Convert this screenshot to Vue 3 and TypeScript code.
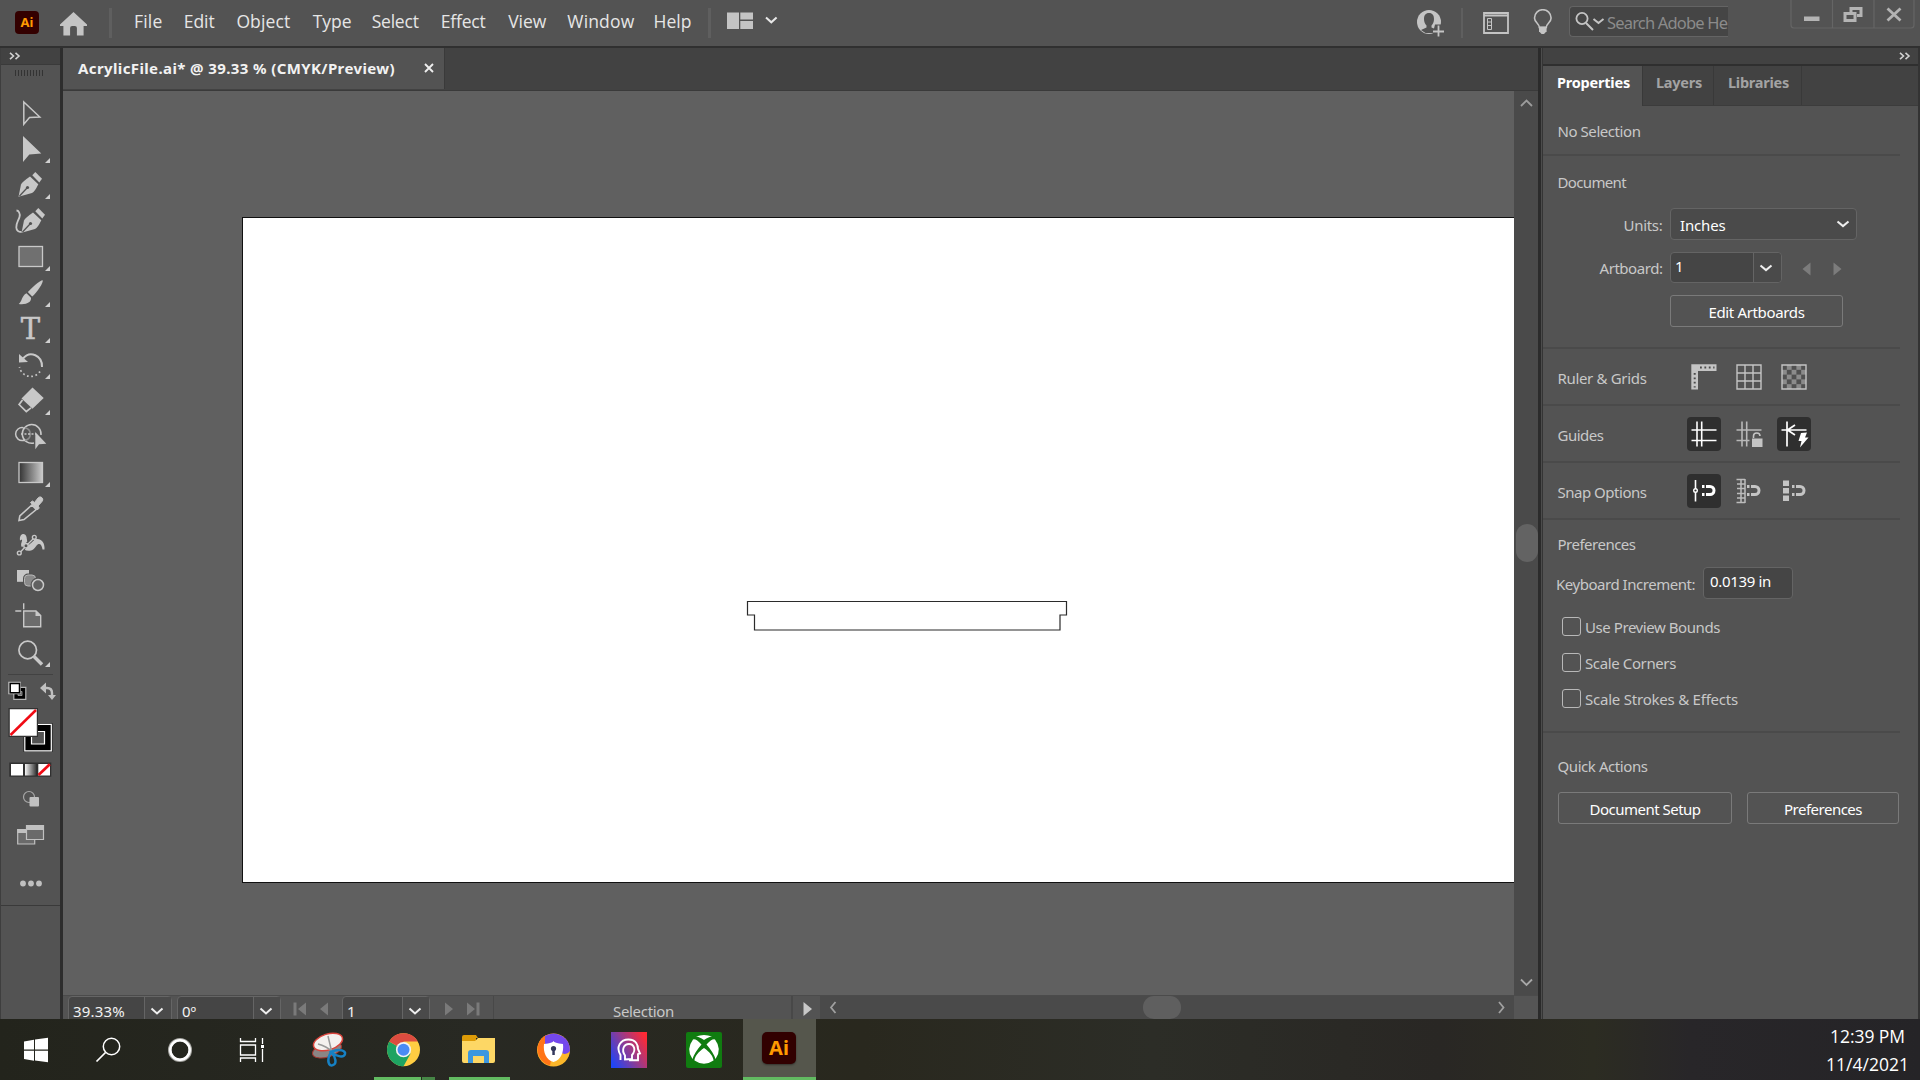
<script setup lang="ts">
import type { Directive } from 'vue'

// Tracks a label so that its advance width equals the given pixel width.
const vFit: Directive<HTMLElement, number> = {
  mounted(el, { value }) {
    const chars = (el.textContent ?? '').trim().length
    el.style.letterSpacing = '0px'
    const natural = el.getBoundingClientRect().width
    el.style.letterSpacing = `${(value - natural) / chars}px`
  },
}

interface MenuItem { label: string; text: number; slot: number }
const menus: MenuItem[] = [
  { label: 'File', text: 28.5, slot: 49.7 },
  { label: 'Edit', text: 31, slot: 52.7 },
  { label: 'Object', text: 54, slot: 76.3 },
  { label: 'Type', text: 39, slot: 59 },
  { label: 'Select', text: 47, slot: 69 },
  { label: 'Effect', text: 45, slot: 67.5 },
  { label: 'View', text: 38, slot: 59.2 },
  { label: 'Window', text: 67, slot: 86.2 },
  { label: 'Help', text: 38, slot: 54 },
]

const tools = [
  { id: 'selection', more: false }, { id: 'direct', more: true }, { id: 'pen', more: true },
  { id: 'curvature', more: false }, { id: 'rect', more: true }, { id: 'brush', more: true },
  { id: 'type', more: true }, { id: 'rotate', more: true }, { id: 'eraser', more: true },
  { id: 'builder', more: false }, { id: 'gradient', more: true }, { id: 'dropper', more: false },
  { id: 'puppet', more: false }, { id: 'blend', more: false }, { id: 'artboard', more: false },
  { id: 'zoom', more: true },
]

const checks = [
  { label: 'Use Preview Bounds', width: 135 },
  { label: 'Scale Corners', width: 91 },
  { label: 'Scale Strokes & Effects', width: 153 },
]
</script>

<template>
  <div class="screen">
    <header class="menubar">
      <div class="ai-small"><span>Ai</span></div>
      <svg class="home" width="27" height="24" viewBox="0 0 27 24"><path d="M13.5 0 27 12.6V14h-3.4v9.6h-6.7V16a2 2 0 0 0-2-2h-2.8a2 2 0 0 0-2 2v7.6H3.4V14H0v-1.4Z" fill="#c4c4c4" /></svg>
      <i class="vline first" />
      <nav class="menus">
        <div v-for="m in menus" :key="m.label" class="menu" :style="{ width: m.slot + 'px' }"><span v-fit="m.text">{{ m.label }}</span></div>
      </nav>
      <i class="vline" />
      <svg class="arrange" width="54" height="20" viewBox="0 0 54 20"><path d="M1 1.5h12v16.500H1zM14.300 1.500H27v7H14.300zM14.300 10H27v8H14.300z" fill="#c4c4c4" /><path d="m40 6.500 5.300 4.800 5.300-4.800" fill="none" stroke="#e8e8e8" stroke-width="2" /></svg>
      <div class="grow" />
      <svg class="user" width="30" height="30" viewBox="0 0 30 30">
        <circle cx="13" cy="14" r="12" fill="#c4c4c4" />
        <path d="M13 5c3.500 0 5 2.500 5 6 0 2.800-1 5-2.500 6.500v2l6 2.500-5 3H9.500L5 22l5.500-2.500v-2C9 16 8 13.800 8 11c0-3.500 1.500-6 5-6Z" fill="#535353" />
        <path d="M19 16.500h10v12H16z" fill="#535353" /><path d="M22.500 17.500v11M17 23.500h11" stroke="#c4c4c4" stroke-width="1.800" />
      </svg>
      <i class="vline user-line" />
      <svg class="workspace" width="26" height="22" viewBox="0 0 26 22"><path d="M1 1h24v20H1z" fill="none" stroke="#c4c4c4" stroke-width="1.800" /><path d="M1 3.500h24" stroke="#c4c4c4" stroke-width="2" /><path d="M4.500 6.500h4v11h-4zM4.500 10h4M4.500 13.500h4" fill="none" stroke="#c4c4c4" /></svg>
      <svg class="bulb" width="20" height="26" viewBox="0 0 20 26"><path d="M6.300 18.500C6.300 14.500 1.500 13.500 1.500 9a8.300 8.300 0 0 1 16.600 0c0 4.500-4.800 5.500-4.800 9.500Z" fill="none" stroke="#c4c4c4" stroke-width="1.600" /><path d="M6 17.500h7.600v4.800L11 25H8.600L6 22.300z" fill="#c4c4c4" /></svg>
      <div class="search">
        <svg width="34" height="24" viewBox="0 0 34 24"><circle cx="9" cy="8.500" r="5.600" fill="none" stroke="#c4c4c4" stroke-width="1.800" /><path d="m13 13 7 7M20.500 9l5 4 5-4" fill="none" stroke="#c4c4c4" stroke-width="2" /></svg>
        <span v-fit="133">Search Adobe Help</span>
      </div>
      <svg class="winbtns" width="126" height="30" viewBox="0 0 126 30">
        <path d="M1 0v25q0 3 3 3h117q3 0 3-3V0M42.500 0v28M84 0v28" fill="none" stroke="#656565" stroke-width="1.200" />
        <path d="M14 16.500h15.500v4.500H14z" fill="#b4b4b4" />
        <path d="M61 12V8.500h10v7h-4M55 13.500h10v7H55z" fill="none" stroke="#b4b4b4" stroke-width="3" />
        <path d="m97.500 8.500 13 12m0-12-13 12" stroke="#b4b4b4" stroke-width="2.800" />
      </svg>
    </header>

    <main class="body">
      <aside class="toolbar">
        <div class="dock-head"><svg width="12" height="8" viewBox="0 0 12 8"><path d="m1 .8 3.500 3.200L1 7.200M6.500.8 10 4 6.500 7.200" fill="none" stroke="#d2d2d2" stroke-width="1.600" /></svg></div>
        <div class="grip"><i /></div>
        <svg v-for="t in tools" :key="t.id" class="tool" width="60" height="36" viewBox="0 0 60 36">
          <path v-if="t.more" d="M50 27v5h-5z" fill="#d0d0d0" />
          <path v-if="t.id === 'selection'" d="M23.800 7v22.300l5.700-6.700 10.300-.6Z" fill="none" stroke="#c8c8c8" stroke-width="1.500" />
          <path v-else-if="t.id === 'direct'" d="M23 5v26l6.300-7.500 12-1Z" fill="#c8c8c8" />
          <g v-else-if="t.id === 'pen' || t.id === 'curvature'">
            <g :transform="t.id === 'curvature' ? 'translate(3 0)' : ''">
              <path d="M18.500 29.800 21 17.500q1-2.500 9-8l8.300 7.800q-3.500 7.500-6.300 8.800Z" fill="#c8c8c8" /><path d="m32.300 8.300 3-3.200L42 11.800l-2.700 3.700Z" fill="#c8c8c8" />
              <path d="m19.500 29 7.500-8" stroke="#535353" stroke-width="1.200" /><circle cx="27.500" cy="20.500" r="1.600" fill="#535353" />
            </g>
            <path v-if="t.id === 'curvature'" d="M16.500 7.500c2 0 4 3 3 6.500-1.200 4-3.500 6-3.200 10.500.2 3 2.200 4.500 5.200 4.500" fill="none" stroke="#c8c8c8" stroke-width="1.800" />
          </g>
          <rect v-else-if="t.id === 'rect'" x="19" y="7.500" width="23.500" height="20" fill="#707070" stroke="#c8c8c8" stroke-width="1.300" />
          <g v-else-if="t.id === 'brush'" fill="#c8c8c8"><path d="M42.700 5.200c1 2-5.500 12-10.500 16.300l-4.400-4.400C31.500 12.500 41 4.700 42.700 5.200Z" /><path d="M26.500 18.300 31 22.800c.6 4.200-4 7.200-12.300 6.200 3.300-1.800 2.800-8.300 7.800-10.700Z" /></g>
          <text v-else-if="t.id === 'type'" x="30.500" y="28.300" text-anchor="middle" font-family="DejaVu Serif" font-size="29" fill="#c8c8c8" stroke="#c8c8c8" stroke-width=".5">T</text>
          <g v-else-if="t.id === 'rotate'" fill="none" stroke="#c8c8c8"><path d="M23 11.500C30 3 42.500 8.500 42 20" stroke-width="2" /><path d="M40 24.500A11.300 11.300 0 0 1 19.500 20" stroke-width="1.700" stroke-dasharray="1.700 2.600" /><path d="M19 7V15.500l9-.5Z" fill="#c8c8c8" stroke="none" /></g>
          <g v-else-if="t.id === 'eraser'"><path d="M32.500 4.500 43.700 15 32.500 25.800 21.500 15.500Z" fill="#c8c8c8" /><path d="m22.500 17-3.400 4.500 7.200 7 4.700-3.700" fill="none" stroke="#c8c8c8" stroke-width="1.700" /></g>
          <g v-else-if="t.id === 'builder'" fill="none" stroke="#c8c8c8" stroke-width="1.500"><path d="M34 24a9.400 9.400 0 1 1 7-8M23.500 8.700a6.500 6.500 0 1 0 0 12.700l3-.5" /><path d="M25 9c7 1 7 11 0 12.300" stroke="#8c8c8c" /><path d="M21 15h15" stroke-dasharray="2 1.500" /><path d="M35.300 13v17.300l3.700-5 7.300-.6Z" fill="#c8c8c8" stroke="none" /></g>
          <g v-else-if="t.id === 'gradient'"><defs><linearGradient id="tool-grad"><stop stop-color="#333" /><stop offset="1" stop-color="#cacaca" /></linearGradient></defs><rect x="19" y="7.500" width="23.500" height="20" fill="url(#tool-grad)" stroke="#c8c8c8" stroke-width="1.300" /></g>
          <g v-else-if="t.id === 'dropper'"><path d="m31.800 14 4.500 4.500L24 28.500l-5 1 .8-4.500Z" fill="none" stroke="#c8c8c8" stroke-width="1.600" /><path d="m30.500 11.500 2-1.500 2 1.500 3.500-4.500c2.500-3 6.500.8 4 3.500L38 15l1.300 2-2 2Z" fill="#c8c8c8" stroke="#c8c8c8" stroke-linejoin="round" /></g>
          <g v-else-if="t.id === 'puppet'"><path d="M20 13.500c-1-7.500 5.500-8 6.500-3.500.5 3 .5 5 2.500 7 3-1 4-4.300 7-5 6-1 9 4.500 8.500 10.500h-2c-.5-4-2-6-4-5.500-2.500 1-3.500 5.500-7.500 6.500-4.500 1.200-8-1-9.500-4-1.200-2.500 1-5.500.5-7Z" fill="#c8c8c8" /><path d="m19.500 26.300 6.500-8 8.300-8" stroke="#535353" stroke-width="3.500" /><path d="m20.500 25 5-5.500 8-8" stroke="#c8c8c8" stroke-width="1.300" /><g fill="#535353" stroke="#c8c8c8" stroke-width="1.400"><circle cx="19.300" cy="26" r="1.900" /><circle cx="26" cy="18.700" r="2.200" /><circle cx="34.300" cy="10.300" r="1.900" /></g></g>
          <g v-else-if="t.id === 'blend'"><path d="M17 7h12v11.800H17z" fill="#c8c8c8" /><rect x="24.500" y="12" width="11" height="11" rx="3.500" fill="#8a8a8a" stroke="#535353" stroke-width="3" /><rect x="24.500" y="12" width="11" height="11" rx="3.500" fill="#8a8a8a" stroke="#b8b8b8" /><circle cx="38" cy="22" r="5.500" fill="#606060" stroke="#535353" stroke-width="4" /><circle cx="38" cy="22" r="5.500" fill="#606060" stroke="#c8c8c8" stroke-width="1.500" /></g>
          <g v-else-if="t.id === 'artboard'"><path d="M23.700 12H36l4.700 4.500v11.200h-17z" fill="#6c6c6c" stroke="#c8c8c8" stroke-width="1.400" /><path d="M35.500 11.500v5.500H41Z" fill="#c8c8c8" /><path d="M23.700 4.300v6M15.300 12h6" stroke="#c8c8c8" stroke-width="1.400" /></g>
          <g v-else fill="none" stroke="#c8c8c8"><circle cx="27.700" cy="15" r="8.800" stroke-width="1.700" /><path d="m34 21.500 8 8" stroke-width="3.400" /></g>
        </svg>
        <svg class="swatches" width="60" height="231" viewBox="0 674 60 231">
          <defs><linearGradient id="sw-grad"><stop stop-color="#f4f4f4" /><stop offset="1" stop-color="#3c3c3c" /></linearGradient></defs>
          <path d="M8 674.500h45" stroke="#424242" />
          <path d="M13.800 687.300h12v12h-12z" fill="#000" stroke="#b5b5b5" stroke-width="1.200" /><path d="M18 691.500h4v4h-4z" fill="#535353" stroke="#aaa" stroke-width=".8" />
          <path d="M9.300 682.700h10.500v10.500H9.300z" fill="#fff" stroke="#c4c4c4" stroke-width="2" /><path d="M10.200 683.500h9.300v9.300h-9.300z" fill="#fff" stroke="#000" stroke-width="1.500" />
          <path d="M44 688h3q5 0 5 5v4" fill="none" stroke="#c0c0c0" stroke-width="2.400" /><path d="M40 688l6-5.500v11ZM48 695h8l-4 5Z" fill="#c0c0c0" />
          <path d="M23.500 723h29v29h-29z" fill="#1c1c1c" /><path d="M24.800 724.300h26.500v26.500H24.800z" fill="#000" stroke="#fff" stroke-width="1.200" /><path d="M31.500 731.500h13v12.500h-13z" fill="#535353" stroke="#fff" stroke-width="1.200" />
          <path d="M8.500 708h29.500V737H8.500z" fill="#333" /><path d="M9.800 709.300h27v26.500h-27z" fill="#fff" /><path d="m10.500 735 25.500-25" stroke="#f00a14" stroke-width="2.500" />
          <path d="M9.300 762.500h42v14.300h-42z" fill="#303030" /><path d="M11 764h12v11.500H11z" fill="#fff" /><path d="M25 764h11v11.500H25z" fill="url(#sw-grad)" /><path d="M38.300 764H50v11.500H38.300z" fill="#fff" /><path d="m38.500 775 11.300-10.700" stroke="#f00a14" stroke-width="2.700" />
          <circle cx="29" cy="797" r="5.500" fill="none" stroke="#a8a8a8" stroke-width="1.200" /><rect x="29.500" y="797" width="9.500" height="9.500" rx="1" fill="#c0c0c0" />
          <path d="M17.700 829.500h17v14.500h-17z" fill="#6a6a6a" stroke="#c0c0c0" stroke-width="1.200" /><path d="M17.300 829h17.500v4H17.300z" fill="#c0c0c0" />
          <path d="M26.500 825.500h17v14h-17z" fill="#6a6a6a" stroke="#c0c0c0" stroke-width="1.200" /><path d="M26 825h18v5H26z" fill="#c0c0c0" />
          <g fill="#c0c0c0"><circle cx="23" cy="883.500" r="2.900" /><circle cx="31" cy="883.500" r="2.900" /><circle cx="39" cy="883.500" r="2.900" /></g>
        </svg>
      </aside>

      <section class="document">
        <div class="tabs"><div class="doc-tab"><span v-fit="317">AcrylicFile.ai* @ 39.33 % (CMYK/Preview)</span><svg width="10" height="10" viewBox="0 0 10 10"><path d="m1 1 8 8m0-8L1 9" stroke="#eee" stroke-width="1.900" /></svg></div></div>
        <div class="stage">
          <svg class="canvas" width="1451" height="904" viewBox="63 91 1451 904">
            <rect x="242.500" y="217.500" width="1280" height="665" fill="#fff" stroke="#111" stroke-width="1" />
            <path d="M747.500 601.500h319v13.500h-6.500v15H754.500V615h-7z" fill="none" stroke="#2b2b2b" stroke-width="1.200" />
          </svg>
          <div class="vscroll">
            <svg width="24" height="24" viewBox="0 0 24 24"><path d="m7 15 5.500-5.500L18 15" fill="none" stroke="#9c9c9c" stroke-width="1.800" /></svg>
            <i />
            <svg width="24" height="24" viewBox="0 0 24 24"><path d="m7 8.500 5.500 5.500L18 8.500" fill="none" stroke="#a8a8a8" stroke-width="1.800" /></svg>
          </div>
        </div>
        <div class="status">
          <div class="field zoomfield"><span v-fit="56">39.33%</span><b><svg width="14" height="8" viewBox="0 0 14 8"><path d="m1.500 1.500 5.500 5 5.500-5" /></svg></b></div>
          <div class="field rotfield"><span v-fit="18">0º</span><b><svg width="14" height="8" viewBox="0 0 14 8"><path d="m1.500 1.500 5.500 5 5.500-5" /></svg></b></div>
          <svg class="nav" width="61" height="24" viewBox="282 995 61 24"><path d="M294.500 1002.500h3v13h-3zM307 1002.500v13l-8-6.500zM329 1002.500v13l-8-6.500z" fill="#7a7a7a" /></svg>
          <div class="field pagefield"><span>1</span><b><svg width="14" height="8" viewBox="0 0 14 8"><path d="m1.500 1.500 5.500 5 5.500-5" /></svg></b></div>
          <svg class="nav" width="63" height="24" viewBox="431 995 63 24"><path d="M446 1002.500v13l8-6.500zM468 1002.500v13l8-6.500zM477.500 1002.500h3v13h-3z" fill="#7a7a7a" /></svg>
          <div class="mode"><span v-fit="61">Selection</span></div>
          <svg class="nav play" width="27" height="24" viewBox="0 0 27 24"><path d="M10.500 7v14l8.500-7z" fill="#c8c8c8" /></svg>
          <div class="hscroll">
            <svg width="24" height="24" viewBox="0 0 24 24"><path d="m15.500 7-4.500 5.500 4.500 5.500" fill="none" stroke="#a0a0a0" stroke-width="1.800" /></svg>
            <i />
            <svg width="24" height="24" viewBox="0 0 24 24"><path d="m9 7 4.500 5.500L9 18" fill="none" stroke="#a0a0a0" stroke-width="1.800" /></svg>
          </div>
          <div class="corner" />
        </div>
      </section>

      <aside class="panel">
        <div class="panel-head"><svg width="12" height="8" viewBox="0 0 12 8"><path d="m1 .8 3.500 3.200L1 7.200M6.500.8 10 4 6.500 7.200" fill="none" stroke="#d2d2d2" stroke-width="1.600" /></svg></div>
        <div class="panel-tabs">
          <div class="ptab active"><span v-fit="73">Properties</span></div>
          <div class="ptab t2"><span v-fit="46">Layers</span></div>
          <div class="ptab t3"><span v-fit="61">Libraries</span></div>
        </div>
        <div class="panel-body">
          <div class="sec nosel"><span v-fit="83">No Selection</span></div>
          <div class="sec doc">
            <div class="heading"><span v-fit="68.500">Document</span></div>
            <div class="line"><label><span v-fit="39">Units:</span></label><div class="box select"><span v-fit="45.500">Inches</span><svg width="14" height="8" viewBox="0 0 14 8"><path d="m1.500 1.500 5.500 4.600 5.500-4.600" /></svg></div></div>
            <div class="line art"><label><span v-fit="63">Artboard:</span></label><div class="box combo"><span>1</span><b><svg width="14" height="8" viewBox="0 0 14 8"><path d="m1.500 1.500 5.500 4.600 5.500-4.600" /></svg></b></div><svg class="steps" width="40" height="14" viewBox="0 0 40 14"><path d="M8.500.5v13L.5 7zM31.500.5v13l8-6.500z" fill="#7c7c7c" /></svg></div>
            <div class="btn edit"><span v-fit="96">Edit Artboards</span></div>
          </div>
          <div class="sec opt">
            <div class="optlabel"><span v-fit="89">Ruler &amp; Grids</span></div>
            <svg class="ico" width="34" height="34" viewBox="0 0 34 34"><path d="M4.300 4.300h25.200v6.700H11v18.500H4.300z" fill="#c4c4c4" /><path d="M13 7.500h14.500" stroke="#4b4b4b" stroke-width="2" stroke-dasharray="1.800 2.600" /><path d="M7.700 13v14.500" stroke="#4b4b4b" stroke-width="2" stroke-dasharray="1.800 2.600" /></svg>
            <svg class="ico" width="34" height="34" viewBox="0 0 34 34"><path d="M5 5h24v24H5zM13 5v24M21 5v24M5 13h24M5 21h24" fill="none" stroke="#c4c4c4" stroke-width="1.400" /></svg>
            <svg class="ico" width="34" height="34" viewBox="0 0 34 34"><defs><pattern id="chk" x="5" y="5" width="9.600" height="9.600" patternUnits="userSpaceOnUse"><path d="M0 0h9.600v9.600H0z" fill="#505050" /><path d="M0 4.800h4.800v4.800H0zM4.800 0h4.800v4.800H4.800z" fill="#8b8b8b" /></pattern></defs><path d="M5 5h24v24H5z" fill="url(#chk)" stroke="#c4c4c4" stroke-width="1.400" /></svg>
          </div>
          <div class="sec opt">
            <div class="optlabel"><span v-fit="46">Guides</span></div>
            <svg class="ico on" width="34" height="34" viewBox="0 0 34 34"><path d="M10 4.500v25M14.700 4.500v25M4.500 13h25M4.500 23.500h25" stroke="#fff" stroke-width="1.600" /></svg>
            <svg class="ico" width="34" height="34" viewBox="0 0 34 34"><path d="M10 4.500v25M14.700 4.500v25M4.500 13h25M4.500 23.500h13" stroke="#b8b8b8" stroke-width="1.600" /><path d="M20 21.500h10.500V30H20z" fill="#c4c4c4" /><path d="M21.500 21v-2c0-4 6.500-4 6.500 0" fill="none" stroke="#c4c4c4" stroke-width="1.600" /></svg>
            <svg class="ico on" width="34" height="34" viewBox="0 0 34 34"><path d="M10 4.500v25M4.500 13h25M18 8l-7.500 5L18 18" fill="none" stroke="#fff" stroke-width="1.700" /><path d="m24 16 6-.5-2 5h3.500L23 30.500l1.500-6.500h-3Z" fill="#fff" /></svg>
          </div>
          <div class="sec opt">
            <div class="optlabel"><span v-fit="89">Snap Options</span></div>
            <svg class="ico on" width="34" height="34" viewBox="0 0 34 34"><path d="M8.500 6v21.500" stroke="#fff" stroke-width="1.600" /><circle cx="8.500" cy="16.500" r="1.800" fill="#2f2f2f" stroke="#fff" stroke-width="1.400" /><path d="M19 12.500h4a4 4 0 0 1 0 8h-4" fill="none" stroke="#fff" stroke-width="3" /><path d="M15 11h2.500v3H15zM15 19h2.500v3H15z" fill="#fff" /></svg>
            <svg class="ico" width="34" height="34" viewBox="0 0 34 34"><path d="M13 5v24M4.500 5.500H13M4.500 28.500H13M9 5v24M5 10h8M5 14.500h8M5 19.500h8M5 24h8" stroke="#bcbcbc" stroke-width="1.500" fill="none" /><path d="M19 12.500h4a4 4 0 0 1 0 8h-4" fill="none" stroke="#c4c4c4" stroke-width="3" /><path d="M15 11h2.500v3H15zM15 19h2.500v3H15z" fill="#c4c4c4" /></svg>
            <svg class="ico" width="34" height="34" viewBox="0 0 34 34"><path d="M6 6.500h6v5.500H6zM6 14h6v5.500H6zM6 21.500h6V27H6z" fill="#c4c4c4" /><path d="M19 12.500h4a4 4 0 0 1 0 8h-4" fill="none" stroke="#c4c4c4" stroke-width="3" /><path d="M15 11h2.500v3H15zM15 19h2.500v3H15z" fill="#c4c4c4" /></svg>
          </div>
          <div class="sec prefs">
            <div class="heading"><span v-fit="78">Preferences</span></div>
            <div class="key"><span v-fit="139">Keyboard Increment:</span><div class="box inc"><span v-fit="61">0.0139 in</span></div></div>
            <div v-for="c in checks" :key="c.label" class="check"><i /><span v-fit="c.width">{{ c.label }}</span></div>
          </div>
          <div class="quick">
            <div class="heading"><span v-fit="90">Quick Actions</span></div>
            <div class="btns"><div class="btn b1"><span v-fit="111">Document Setup</span></div><div class="btn b2"><span v-fit="78">Preferences</span></div></div>
          </div>
        </div>
      </aside>
    </main>

    <footer class="taskbar">
      <svg class="tb" width="72" height="61" viewBox="0 1019 72 61"><path d="m24 1041.500 10-1.800v9.800H24zM35 1039.500l13-1.700v11.700H35zM24 1050.700h10v10L24 1059zM35 1050.700h13v11.500l-13-1.700z" fill="#fff" /></svg>
      <svg class="tb" width="72" height="61" viewBox="72 1019 72 61"><circle cx="111.500" cy="1046.500" r="8.200" fill="none" stroke="#fff" stroke-width="1.500" /><path d="m105.500 1052.500-9 9" stroke="#fff" stroke-width="1.700" /></svg>
      <svg class="tb" width="72" height="61" viewBox="144 1019 72 61"><circle cx="180" cy="1050" r="10.300" fill="none" stroke="#a5a5a1" stroke-width="3.500" /><circle cx="180" cy="1050" r="9.700" fill="none" stroke="#fff" stroke-width="2.500" /></svg>
      <svg class="tb" width="76" height="61" viewBox="216 1019 76 61"><path d="M240.500 1038v3.500h15V1038M240.500 1062v-4h15v4M240.500 1045h15v10h-15zM262.500 1038v6M262.500 1049v13" fill="none" stroke="#fff" stroke-width="1.300" /><path d="M261 1045h3v3h-3z" fill="#fff" /></svg>
      <svg class="tb" width="76" height="61" viewBox="292 1019 76 61">
        <ellipse cx="327" cy="1050" rx="15" ry="7" fill="#8b8585" stroke="#a63630" transform="rotate(-17 327 1050)" /><ellipse cx="328" cy="1042" rx="15" ry="8" fill="#f4f1ef" stroke="#d9443c" stroke-width="1.500" transform="rotate(-17 328 1042)" />
        <path d="M318 1044q8 2 15 8M328 1036l4 17" stroke="#999" stroke-width="1.500" fill="none" /><path d="M331 1052c9-4 15-1 14 2-1 4-8 3-14-2Zm0 0c-5 9-2 15 2 13 4-1 3-8-2-13Z" fill="none" stroke="#1681c4" stroke-width="2.500" />
      </svg>
      <svg class="tb" width="73" height="61" viewBox="368 1019 73 61">
        <circle cx="403.500" cy="1049.700" r="16.500" fill="#ffcd42" /><path d="M389.200 1041.500a16.500 16.500 0 0 0 14.300 24.700l7-12.500-7-4Z" fill="#1ea362" /><path d="M389.200 1041.500a16.500 16.500 0 0 1 28.600 0h-14.300v8Z" fill="#dc4c40" />
        <circle cx="403.500" cy="1049.700" r="7.600" fill="#f3f3f3" /><circle cx="403.500" cy="1049.700" r="6" fill="#4a8bf4" /><path d="M374 1077h47v3h-47z" fill="#62bb61" /><path d="M422 1077h13v3h-13z" fill="#468646" />
      </svg>
      <svg class="tb" width="75" height="61" viewBox="441 1019 75 61">
        <path d="M462 1037q0-2 2-2h12l2 3h-2v5h-14z" fill="#dd9b07" /><path d="M478 1038h17v23q0 2-2 2h-29q-2 0-2-2v-20h13Z" fill="#fdd765" /><path d="M468 1063v-10q0-3 3-3h15q3 0 3 3v10h-5v-7h-11v7z" fill="#3c97df" /><path d="M449 1077h61v3h-61z" fill="#62bb61" />
      </svg>
      <svg class="tb" width="76" height="61" viewBox="516 1019 76 61">
        <circle cx="553.500" cy="1050" r="16.500" fill="#fbb72a" /><path d="M550 1065.500A16.500 16.500 0 0 1 546 1035l8 12Z" fill="#ff7417" /><path d="M545 1036a16.500 16.500 0 0 1 25 15q-2 3-6 3l-19-10Z" fill="#7447ed" />
        <path d="M544 1044q9-1 9.500-3 .5 2 9.500 3c1 8-2 16-9.500 18-7.500-2-10.500-10-9.500-18Z" fill="#fff" /><circle cx="553.500" cy="1048.500" r="2.600" fill="#34385d" /><path d="M552.300 1049h2.500v6h-2.500z" fill="#34385d" />
      </svg>
      <svg class="tb" width="75" height="61" viewBox="592 1019 75 61">
        <defs><linearGradient id="head" x1="0" y1=".8" x2="1" y2=".2"><stop stop-color="#2145f5" /><stop offset=".5" stop-color="#913b91" /><stop offset="1" stop-color="#ff2a34" /></linearGradient></defs><path d="M611 1032h36v36h-36z" fill="url(#head)" />
        <path d="M620.500 1060v-5c-5-8 0-15.500 8-15.500 8 0 9.500 6 9.500 9.500l2 4.500-2 .7v6h-9" fill="none" stroke="#fff" stroke-width="1.900" /><path d="M625 1059.500v-4c-4-6-1-11.500 4-11.500s7.500 6 3 11v4z" fill="none" stroke="#fff" stroke-width="1.900" />
      </svg>
      <svg class="tb" width="76" height="61" viewBox="667 1019 76 61">
        <rect x="686" y="1032" width="36" height="36" rx="2" fill="#107c10" /><path d="M696 1036.500q8-3 16 0-3 0-8 3.500-5-3.500-8-3.500ZM693 1039.500q3-1 8.500 5-7 8-9 14.500-7-9.500.5-19.500ZM715 1039.500q-3-1-8.500 5 7 8 9 14.500 7-9.500-.5-19.500ZM704 1048c6 4 9.500 9 9.500 12.500q-9.500 6.500-19 0c0-3.500 3.500-8.500 9.500-12.500Z" fill="#fff" />
      </svg>
      <div class="ai-task"><div class="ai-large"><span>Ai</span></div></div>
      <div class="grow" />
      <div class="clock"><div><span v-fit="75">12:39 PM</span></div><div><span v-fit="83">11/4/2021</span></div></div>
    </footer>
  </div>
</template>

<style>
body { margin: 0; overflow: hidden; background: #535353; }
</style>

<style scoped>
.screen { width: 1920px; height: 1080px; display: flex; flex-direction: column; overflow: hidden; background: #535353; font-family: "Noto Sans", sans-serif; font-size: 15px; line-height: 20px; color: #c8c8c8; }
.screen * { box-sizing: border-box; }
.screen span { white-space: nowrap; display: inline-block; }
svg { display: block; flex: none; }
.grow { flex: 1; }
.menubar { height: 48px; flex: none; display: flex; align-items: flex-start; border-bottom: 2px solid #303030; background: #535353; }
.ai-small { width: 24px; height: 23px; margin: 11px 21px 0 15px; border-radius: 4px; background: #300; color: #ff9a00; font-weight: 700; font-size: 13px; line-height: 22px; text-align: center; }
.home { margin-top: 12px; }
.vline { width: 3px; height: 30px; margin-top: 8px; background: #5f5f5f; flex: none; }
.first { margin-left: 22px; margin-right: 22px; }
.menus { display: flex; padding-top: 8px; height: 46px; font-family: "Open Sans", sans-serif; font-size: 17.500px; line-height: 26px; color: #e6e6e6; }
.menu { flex: none; }
.arrange { margin: 11px 0 0 15px; }
.user { margin: 8px 15px 0 0; }
.user-line { margin-right: 20px; width: 2px; }
.workspace { margin: 12px 24px 0 0; }
.bulb { margin: 9px 16px 0 0; }
.search { width: 159px; height: 31px; margin: 6px 62px 0 0; border: 1px solid #646464; border-right: 0; border-radius: 4px 0 0 4px; background: #454545; display: flex; align-items: center; overflow: hidden; color: #8b8b8b; font-size: 16.500px; padding: 2px 0 0 3px; }
.search svg { margin-top: -2px; }
.winbtns { margin-right: 4px; }
.body { height: 971px; display: flex; flex: none; }
.toolbar { width: 63px; display: flex; flex-direction: column; border-left: 1px solid #3e3e3e; border-right: 3px solid #2d2d2d; position: relative; background: #535353; }
.toolbar > * { flex: none; }
.tool, .swatches { margin-left: -1px; }
.dock-head { height: 17px; background: #424242; border-bottom: 1px solid #3a3a3a; padding: 4px 0 0 8px; }
.grip { height: 30px; padding: 5px 0 0 14px; }
.grip i { display: block; width: 29px; height: 6px; background: repeating-linear-gradient(90deg, #333 0 1px, #535353 1px 3px); }
.swatches { margin-top: 3px; }
.toolbar::after { content: ""; height: 1px; background: #3a3a3a; }
.document { width: 1475px; display: flex; flex-direction: column; flex: none; }
.tabs { height: 43px; background: #424242; border-bottom: 1px solid #3a3a3a; flex: none; }
.doc-tab { width: 382px; height: 41px; background: #535353; border-right: 1px solid #3a3a3a; display: flex; align-items: center; justify-content: space-between; padding: 0 10px 2px 15px; font-weight: 700; color: #f2f2f2; }
.stage { height: 904px; display: flex; flex: none; background: #606060; }
.vscroll { width: 24px; background: #4a4a4a; display: flex; flex-direction: column; }
.vscroll i { width: 22px; height: 38px; margin: 409px 0 auto 2px; border-radius: 11px; background: #636363; }
.status { height: 24px; display: flex; overflow: hidden; border-top: 1px solid #4b4b4b; padding-left: 5px; background: #535353; flex: none; }
.field { height: 30px; flex: none; display: flex; border: 1px solid #656565; border-radius: 4px; background: #454545; color: #f2f2f2; justify-content: space-between; }
.field span { padding: 6px 0 0 4px; height: 22px; line-height: 16px; }
.field b { border-left: 1px solid #656565; background: #4a4a4a; padding: 10px 0 0 5px; }
.field svg, .box svg { fill: none; stroke: #eee; stroke-width: 2; }
.zoomfield { width: 104px; }
.zoomfield b, .rotfield b, .pagefield b { width: 27px; }
.rotfield { width: 104px; margin-left: 5px; }
.pagefield { width: 88px; }
.nav { margin-top: -1px; }
.mode { width: 300px; border-left: 1px solid #484848; border-right: 2px solid #484848; padding: 7px 0 0 119px; flex: none; line-height: 16px; }
.hscroll { width: 694px; background: #4a4a4a; display: flex; flex: none; }
.hscroll svg { margin-top: -1px; }
.hscroll i { width: 38px; height: 23px; margin: 0 auto 0 299px; border-radius: 11px; background: #5f5f5f; }
.corner { width: 24px; background: #555; flex: none; }
.panel { width: 382px; border-left: 3px solid #2b2b2b; border-right: 2px solid #333; background: #535353; padding-left: 2px; box-shadow: inset 1px 0 #4c4c4c, inset 2px 0 #353535; }
.panel-head { height: 18px; background: #424242; border-bottom: 2px solid #2f2f2f; display: flex; justify-content: flex-end; padding: 4px 7px 0 0; }
.panel-tabs { height: 40px; display: flex; background: #424242; border-bottom: 1px solid #3c3c3c; font-weight: 700; font-size: 14.500px; color: #a3a3a3; }
.ptab { border-right: 1px solid #393939; padding: 6px 0 0 13px; height: 39px; flex: none; }
.ptab.active { width: 100px; height: 40px; padding-left: 14px; background: #535353; color: #fff; }
.t2 { width: 71px; }
.t3 { width: 88px; padding-left: 14px; }
.panel-body { width: 357px; }
.sec { border-bottom: 2px solid #4a4a4a; }
.nosel { height: 50px; padding: 15px 0 0 14.500px; }
.doc { height: 193px; }
.heading { height: 52px; padding: 16px 0 0 14.500px; }
.line { display: flex; height: 32px; margin-bottom: 12px; }
.line.art { height: 31px; }
.line label { width: 119.500px; text-align: right; padding-top: 7px; margin-right: 7.500px; }
.line.art label { padding-top: 6px; }
.box { border: 1.500px solid #646464; border-radius: 4px; background: #4a4a4a; color: #fff; display: flex; justify-content: space-between; }
.select { width: 187px; height: 32px; padding: 6px 6px 0 9px; }
.select svg { margin-top: 5px; }
.combo { width: 112px; height: 31px; background: #454545; }
.combo span { padding: 3px 0 0 4px; }
.combo b { width: 28px; border-left: 1px solid #656565; background: #4a4a4a; padding: 11px 0 0 5px; border-radius: 0 4px 4px 0; }
.steps { margin: 10px 0 0 20px; }
.btn { border: 1.500px solid #7a7a7a; border-radius: 3px; height: 32px; text-align: center; padding-top: 6px; color: #fff; }
.edit { width: 173px; margin-left: 127px; }
.opt { height: 57px; display: flex; padding-top: 10.500px; }
.optlabel { width: 143.500px; padding: 8px 0 0 14.500px; flex: none; }
.ico { margin-right: 11px; border-radius: 4px; }
.ico.on { background: #2f2f2f; }
.prefs { height: 213px; }
.prefs .heading { height: 47px; padding-top: 14px; }
.key { display: flex; padding-left: 13px; height: 50px; }
.key > span { padding-top: 7px; margin-right: 8px; }
.inc { width: 90px; height: 32px; background: #454545; padding: 3px 0 0 6px; justify-content: flex-start; }
.check { display: flex; height: 36px; padding-left: 19px; }
.check i { width: 19px; height: 19px; border: 1.500px solid #b8b8b8; border-radius: 3px; margin-right: 4px; }
.check span { height: 20px; }
.quick .heading { height: 59px; padding-top: 23px; }
.btns { display: flex; padding-left: 15px; gap: 15px; }
.b1 { width: 174px; }
.b2 { width: 152px; }
.taskbar { height: 61px; flex: none; display: flex; background: linear-gradient(90deg, #23241c 0, #282923 25%, #29281e 45%, #2c2d27 60%, #292724 75%, #2c2c22 83%, #282629 88%, #252427 100%); }
.ai-task { width: 73px; height: 61px; background: #55564c; border-bottom: 3px solid #62bb61; padding: 13px 0 0 19px; }
.ai-large { width: 34px; height: 32px; border-radius: 5px; background: #310000; color: #ff9a00; font-weight: 700; font-size: 20px; line-height: 31px; text-align: center; box-shadow: 0 1px 2px #0006; }
.clock { width: 100px; padding-top: 4px; text-align: center; color: #fff; font-family: "Open Sans", sans-serif; font-size: 17.500px; line-height: 27.500px; margin-right: 2.500px; }
</style>
